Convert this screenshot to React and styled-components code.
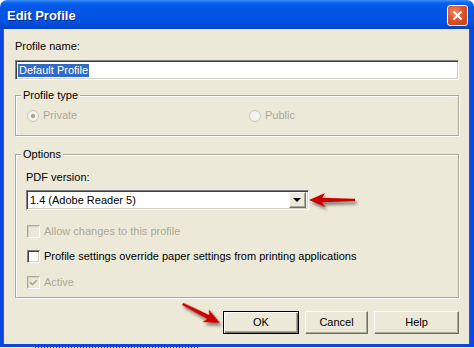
import React from 'react';
import styled, { createGlobalStyle } from 'styled-components';

const GlobalStyle = createGlobalStyle`
  html, body {
    margin: 0;
    padding: 0;
    background: #ffffff;
  }
  body {
    width: 474px;
    height: 348px;
    overflow: hidden;
    font-family: "Liberation Sans", Arial, sans-serif;
    font-size: 11px;
    color: #000000;
  }
`;

const Window = styled.div`
  position: relative;
  width: 474px;
  display: flex;
  flex-direction: column;
`;

const TitleBar = styled.div`
  height: 29px;
  box-sizing: border-box;
  border-radius: 7px 7px 0 0;
  background: linear-gradient(
    180deg,
    #3d8ff8 0px,
    #0a62ec 3px,
    #0056e8 8px,
    #0054e3 20px,
    #004bd6 26px,
    #0040c0 29px
  );
  display: flex;
  align-items: flex-start;
  justify-content: space-between;
  padding: 0 6px 0 7px;
`;

const Title = styled.span`
  margin-top: 8px;
  color: #ffffff;
  font-weight: bold;
  font-size: 13px;
  line-height: 15px;
  text-shadow: 1px 1px 0 #0f1e7a;
`;

const CloseButton = styled.div`
  margin-top: 5px;
  width: 21px;
  height: 21px;
  box-sizing: border-box;
  border: 1px solid #ffffff;
  border-radius: 3px;
  background: radial-gradient(circle at 35% 30%, #f0865f 0%, #e0532b 45%, #c23f17 100%);
  display: flex;
  align-items: center;
  justify-content: center;
`;

const Body = styled.div`
  background: #ece9d8;
  border-style: solid;
  border-color: #0b47dc;
  border-width: 0 4px 3px 3px;
  box-shadow: inset 1px 0 0 #1a5ef0, inset -1px 0 0 #1a5ef0;
  padding: 11px 11px 10px 12px;
  display: flex;
  flex-direction: column;
`;

const FieldLabel = styled.div`
  line-height: 13px;
  margin-top: ${(p) => p.$top || 0}px;
`;

const SunkenBox = styled.div`
  height: 20px;
  box-sizing: border-box;
  background: #ffffff;
  border: 1px solid;
  border-color: #808080 #ffffff #ffffff #808080;
  box-shadow: inset 1px 1px 0 #404040, inset -1px -1px 0 #d4d0c8;
  display: flex;
  align-items: center;
`;

const TextInput = styled(SunkenBox)`
  margin-top: 7px;
  padding-left: 2px;
`;

const Selected = styled.span`
  background: #316ac5;
  color: #ffffff;
  line-height: 13px;
  padding: 0 1px;
`;

const Group = styled.fieldset`
  margin: ${(p) => p.$top}px 0 0 0;
  padding: ${(p) => p.$pad};
  min-inline-size: auto;
  border: 1px solid #aca899;
  box-shadow: 1px 1px 0 #ffffff, inset 1px 1px 0 #ffffff;
`;

const Legend = styled.legend`
  margin-left: ${(p) => p.$shift}px;
  padding: 0 2px;
  line-height: 13px;
  background: #ece9d8;
`;

const RadioRow = styled.div`
  display: flex;
  align-items: center;
  height: 13px;
`;

const RadioItem = styled.div`
  display: flex;
  align-items: center;
  gap: 4px;
  width: ${(p) => (p.$width ? `${p.$width}px` : 'auto')};
`;

const DisabledText = styled.span`
  color: #aca899;
  line-height: 13px;
`;

const Select = styled(SunkenBox)`
  margin-top: 6px;
  width: 283px;
  padding: 0 2px 0 3px;
`;

const SelectText = styled.span`
  flex: 1;
  line-height: 13px;
`;

const SelectButton = styled.div`
  width: 17px;
  height: 16px;
  box-sizing: border-box;
  background: #ece9d8;
  border: 1px solid;
  border-color: #ffffff #716f64 #716f64 #ffffff;
  box-shadow: inset -1px -1px 0 #aca899;
  display: flex;
  align-items: center;
  justify-content: center;
`;

const DownTriangle = styled.span`
  width: 0;
  height: 0;
  border-left: 4px solid transparent;
  border-right: 4px solid transparent;
  border-top: 4px solid #000000;
  margin-left: -1px;
`;

const CheckRow = styled.div`
  display: flex;
  align-items: center;
  gap: 4px;
  height: 13px;
  padding-left: 1px;
  margin-top: ${(p) => p.$top}px;
`;

const CheckBox = styled.span`
  width: 13px;
  height: 13px;
  box-sizing: border-box;
  border: 1px solid;
  display: flex;
  align-items: center;
  justify-content: center;
  ${(p) =>
    p.$disabled
      ? `
    border-color: #aca899 #ffffff #ffffff #aca899;
    box-shadow: inset 1px 1px 0 #d4d0c8;
    background: #ece9d8;
  `
      : `
    border-color: #808080 #ffffff #ffffff #808080;
    box-shadow: inset 1px 1px 0 #404040, inset -1px -1px 0 #d4d0c8;
    background: #ffffff;
  `}
`;

const CheckText = styled.span`
  line-height: 13px;
  color: ${(p) => (p.$disabled ? '#aca899' : '#000000')};
`;

const ButtonRow = styled.div`
  display: flex;
  justify-content: flex-end;
  gap: 6px;
  margin-top: 13px;
`;

const Button = styled.div`
  width: ${(p) => p.$width}px;
  height: 23px;
  box-sizing: border-box;
  background: #ece9d8;
  display: flex;
  align-items: center;
  justify-content: center;
  line-height: 13px;
  border: 1px solid;
  ${(p) =>
    p.$default
      ? `
    border-color: #000000;
    box-shadow: inset 1px 1px 0 #ffffff, inset -1px -1px 0 #716f64, inset -2px -2px 0 #aca899;
  `
      : `
    border-color: #ffffff #716f64 #716f64 #ffffff;
    box-shadow: inset -1px -1px 0 #aca899;
  `}
`;

const Overlay = styled.svg`
  position: absolute;
  left: 0;
  top: 0;
  width: 474px;
  height: 348px;
  pointer-events: none;
`;

const BottomStrip = styled.div`
  height: 2px;
  background: #f4f4f4;
  display: flex;
`;

const TextTicks = styled.div`
  margin-left: 35px;
  width: 165px;
  height: 2px;
  background: repeating-linear-gradient(90deg, #222222 0 1px, transparent 1px 3px);
`;

const Radio = ({ checked }) => (
  <svg width="12" height="12" viewBox="0 0 12 12">
    <circle cx="6" cy="6" r="5.5" fill="#f4f3ee" stroke="#c9c7ba" strokeWidth="1" />
    {checked && <circle cx="6" cy="6" r="2.2" fill="#aca899" />}
  </svg>
);

const RedArrow = ({ x, y, angle, length }) => (
  <g transform={`translate(${x} ${y}) rotate(${angle})`}>
    <polygon points={`${-length},-1.3 -12,-2.2 -12,2.2 ${-length},1.3`} fill="#c90000" />
    <polygon points="0,0 -16,-7 -12,0 -16,7" fill="#c90000" />
  </g>
);

export default function App() {
  return (
    <>
      <GlobalStyle />
      <Window>
        <TitleBar>
          <Title>Edit Profile</Title>
          <CloseButton>
            <svg width="11" height="11" viewBox="0 0 11 11">
              <path d="M1.5 1.5 L9.5 9.5 M9.5 1.5 L1.5 9.5" stroke="#ffffff" strokeWidth="2.2" />
            </svg>
          </CloseButton>
        </TitleBar>
        <Body>
          <FieldLabel>Profile name:</FieldLabel>
          <TextInput>
            <Selected>Default Profile</Selected>
          </TextInput>

          <Group $top={9} $pad="7px 11px 13px">
            <Legend $shift={-6}>Profile type</Legend>
            <RadioRow>
              <RadioItem $width={222}>
                <Radio checked />
                <DisabledText>Private</DisabledText>
              </RadioItem>
              <RadioItem>
                <Radio />
                <DisabledText>Public</DisabledText>
              </RadioItem>
            </RadioRow>
          </Group>

          <Group $top={12} $pad="10px 10px 8px">
            <Legend $shift={-5}>Options</Legend>
            <FieldLabel>PDF version:</FieldLabel>
            <Select>
              <SelectText>1.4 (Adobe Reader 5)</SelectText>
              <SelectButton>
                <DownTriangle />
              </SelectButton>
            </Select>
            <CheckRow $top={15}>
              <CheckBox $disabled />
              <CheckText $disabled>Allow changes to this profile</CheckText>
            </CheckRow>
            <CheckRow $top={12}>
              <CheckBox />
              <CheckText>Profile settings override paper settings from printing applications</CheckText>
            </CheckRow>
            <CheckRow $top={13}>
              <CheckBox $disabled>
                <svg width="9" height="9" viewBox="0 0 9 9">
                  <path d="M1 4.2 L3.4 6.6 L8 2" fill="none" stroke="#aca899" strokeWidth="1.7" />
                </svg>
              </CheckBox>
              <CheckText $disabled>Active</CheckText>
            </CheckRow>
          </Group>

          <ButtonRow>
            <Button $width={76} $default>OK</Button>
            <Button $width={63}>Cancel</Button>
            <Button $width={85}>Help</Button>
          </ButtonRow>
        </Body>
        <BottomStrip>
          <TextTicks />
        </BottomStrip>

        <Overlay viewBox="0 0 474 348">
          <defs>
            <filter id="arrowShadow" x="-50%" y="-50%" width="200%" height="200%">
              <feDropShadow dx="2" dy="3" stdDeviation="1.6" floodColor="#000000" floodOpacity="0.45" />
            </filter>
          </defs>
          <g filter="url(#arrowShadow)">
            <RedArrow x={309} y={200} angle={180} length={46} />
            <RedArrow x={220} y={323} angle={27} length={42} />
          </g>
        </Overlay>
      </Window>
    </>
  );
}
